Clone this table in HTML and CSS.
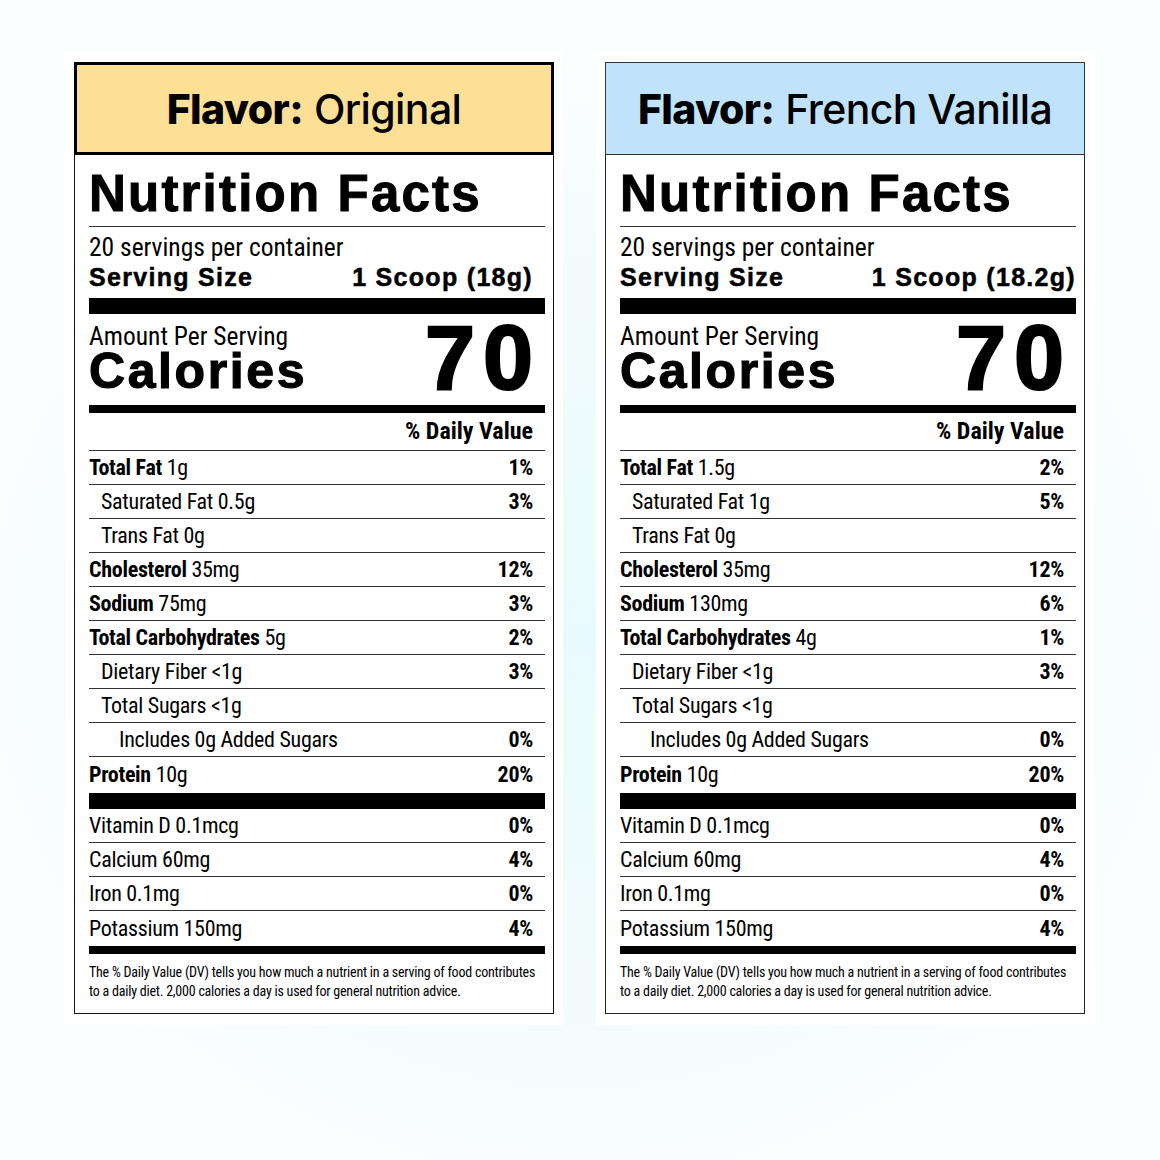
FILE: index.html
```html
<!DOCTYPE html>
<html lang="en">
<head>
<meta charset="utf-8">
<title>Nutrition Facts</title>
<link rel="stylesheet" href="styles.css">
</head>
<body>
<main class="page">
  <section class="panel">
    <div class="label label-original">
      <header class="flavor flavor-original"><span class="flavor-text"><b>Flavor:</b> <span>Original</span></span></header>
      <div class="body">
        <h1 class="title">Nutrition Facts</h1>
        <div class="serving">
          <div class="servings">20 servings per container</div>
          <div class="size"><span>Serving Size</span><span>1 Scoop (18g)</span></div>
        </div>
        <div class="bar bar-xl"></div>
        <div class="cal">
          <div class="cal-left">
            <div class="amount">Amount Per Serving</div>
            <div class="cal-word">Calories</div>
          </div>
          <div class="cal-num">70</div>
        </div>
        <div class="bar bar-md"></div>
        <div class="dv-head">% Daily Value</div>
        <div class="row"><span><b>Total Fat</b> 1g</span><b>1%</b></div>
        <div class="row sub"><span>Saturated Fat 0.5g</span><b>3%</b></div>
        <div class="row sub"><span>Trans Fat 0g</span></div>
        <div class="row"><span><b>Cholesterol</b> 35mg</span><b>12%</b></div>
        <div class="row"><span><b>Sodium</b> 75mg</span><b>3%</b></div>
        <div class="row"><span><b>Total Carbohydrates</b> 5g</span><b>2%</b></div>
        <div class="row sub"><span>Dietary Fiber &lt;1g</span><b>3%</b></div>
        <div class="row sub"><span>Total Sugars &lt;1g</span></div>
        <div class="row sub2"><span>Includes 0g Added Sugars</span><b>0%</b></div>
        <div class="row last"><span><b>Protein</b> 10g</span><b>20%</b></div>
        <div class="bar bar-lg"></div>
        <div class="row"><span>Vitamin D 0.1mcg</span><b>0%</b></div>
        <div class="row"><span>Calcium 60mg</span><b>4%</b></div>
        <div class="row"><span>Iron 0.1mg</span><b>0%</b></div>
        <div class="row last vlast"><span>Potassium 150mg</span><b>4%</b></div>
        <div class="bar bar-md"></div>
        <p class="foot">The % Daily Value (DV) tells you how much a nutrient in a serving of food contributes<br>to a daily diet. 2,000 calories a day is used for general nutrition advice.</p>
      </div>
    </div>
  </section>

  <section class="panel">
    <div class="label label-vanilla">
      <header class="flavor flavor-vanilla"><span class="flavor-text"><b>Flavor:</b> <span>French Vanilla</span></span></header>
      <div class="body">
        <h1 class="title">Nutrition Facts</h1>
        <div class="serving">
          <div class="servings">20 servings per container</div>
          <div class="size size-wide"><span>Serving Size</span><span>1 Scoop (18.2g)</span></div>
        </div>
        <div class="bar bar-xl"></div>
        <div class="cal">
          <div class="cal-left">
            <div class="amount">Amount Per Serving</div>
            <div class="cal-word">Calories</div>
          </div>
          <div class="cal-num">70</div>
        </div>
        <div class="bar bar-md"></div>
        <div class="dv-head">% Daily Value</div>
        <div class="row"><span><b>Total Fat</b> 1.5g</span><b>2%</b></div>
        <div class="row sub"><span>Saturated Fat 1g</span><b>5%</b></div>
        <div class="row sub"><span>Trans Fat 0g</span></div>
        <div class="row"><span><b>Cholesterol</b> 35mg</span><b>12%</b></div>
        <div class="row"><span><b>Sodium</b> 130mg</span><b>6%</b></div>
        <div class="row"><span><b>Total Carbohydrates</b> 4g</span><b>1%</b></div>
        <div class="row sub"><span>Dietary Fiber &lt;1g</span><b>3%</b></div>
        <div class="row sub"><span>Total Sugars &lt;1g</span></div>
        <div class="row sub2"><span>Includes 0g Added Sugars</span><b>0%</b></div>
        <div class="row last"><span><b>Protein</b> 10g</span><b>20%</b></div>
        <div class="bar bar-lg"></div>
        <div class="row"><span>Vitamin D 0.1mcg</span><b>0%</b></div>
        <div class="row"><span>Calcium 60mg</span><b>4%</b></div>
        <div class="row"><span>Iron 0.1mg</span><b>0%</b></div>
        <div class="row last vlast"><span>Potassium 150mg</span><b>4%</b></div>
        <div class="bar bar-md"></div>
        <p class="foot">The % Daily Value (DV) tells you how much a nutrient in a serving of food contributes<br>to a daily diet. 2,000 calories a day is used for general nutrition advice.</p>
      </div>
    </div>
  </section>
</main>
</body>
</html>
```
FILE: styles.css
```css
* { box-sizing: border-box; }
html, body { margin: 0; padding: 0; }
body {
  width: 1160px;
  height: 1160px;
  overflow: hidden;
  color: #000;
  background: radial-gradient(ellipse 55% 50% at 50% 55%, #e8fbfc 0%, #f1fbfc 55%, #fbfefe 100%);
  font-family: "Roboto Condensed", "Liberation Sans", sans-serif;
}
.page {
  display: flex;
  gap: 33px;
  padding: 52px 0 0 65px;
}
.panel {
  background: #fff;
  padding: 10px 9px 11px 9px;
}
.label {
  width: 480px;
  border: 1px solid #111;
  background: #fff;
}
.label-vanilla { border-color: #222; }

.flavor {
  margin: -1px -1px 0;
  height: 93px;
  display: flex;
  align-items: center;
  justify-content: center;
  font-family: "Inter", "Liberation Sans", sans-serif;
  font-size: 41px;
  letter-spacing: -0.6px;
}
.flavor-text { white-space: nowrap; }
.flavor b { font-weight: 800; }
.flavor-text > span { font-weight: 500; }
.flavor-original { background: #fddf95; border: 3px solid #000; }
.flavor-vanilla { background: #c0e3fb; border: 1px solid #333; }

.body { padding: 0 8px 0 14px; }

.title {
  margin: 0;
  padding: 11px 0 4px;
  font-family: "Liberation Sans", sans-serif;
  font-weight: 700;
  font-size: 51px;
  line-height: 56px;
  letter-spacing: 2.2px;
  -webkit-text-stroke: 1px #000;
  border-bottom: 1px solid #333;
}
.serving { padding: 5px 0 6px; }
.servings {
  height: 30px;
  line-height: 30px;
  font-size: 25.5px;
}
.size {
  height: 30px;
  display: flex;
  justify-content: space-between;
  align-items: center;
  padding-right: 12px;
  font-family: "Liberation Sans", sans-serif;
  font-weight: 700;
  font-size: 25px;
  letter-spacing: 1.3px;
  -webkit-text-stroke: 0.5px #000;
}
.size-wide { padding-right: 0; }

.bar { background: #000; }
.bar-xl { height: 16px; }
.bar-lg { height: 16px; }
.bar-md { height: 8px; }

.cal {
  height: 91px;
  display: flex;
  justify-content: space-between;
  align-items: flex-start;
  padding-right: 12px;
}
.amount {
  margin-top: 9px;
  height: 26px;
  line-height: 26px;
  font-size: 25.5px;
}
.cal-word {
  height: 44px;
  line-height: 44px;
  font-family: "Liberation Sans", sans-serif;
  font-weight: 700;
  font-size: 50px;
  letter-spacing: 2.6px;
  -webkit-text-stroke: 1.2px #000;
}
.cal-num {
  margin-top: 4px;
  line-height: 80px;
  font-family: "Liberation Sans", sans-serif;
  font-weight: 700;
  font-size: 90px;
  letter-spacing: 8px;
  margin-right: -8px;
  -webkit-text-stroke: 2.2px #000;
}

.dv-head {
  height: 38px;
  line-height: 37px;
  text-align: right;
  padding-right: 12px;
  font-size: 24px;
  font-weight: 700;
  border-bottom: 1px solid #333;
}

.row {
  height: 34px;
  display: flex;
  justify-content: space-between;
  align-items: center;
  padding-right: 12px;
  font-size: 22px;
  letter-spacing: -0.3px;
  border-bottom: 1px solid #333;
}
.row b { font-weight: 700; }
.row.sub { padding-left: 12px; }
.row.sub2 { padding-left: 30px; }
.row.last { border-bottom: 0; height: 36px; padding-bottom: 2px; }
.row.vlast { height: 35px; padding-bottom: 0; }

.foot {
  margin: 0;
  padding: 9px 0 12px;
  font-size: 14px;
  line-height: 19px;
  letter-spacing: -0.23px;
  white-space: nowrap;
}
```
